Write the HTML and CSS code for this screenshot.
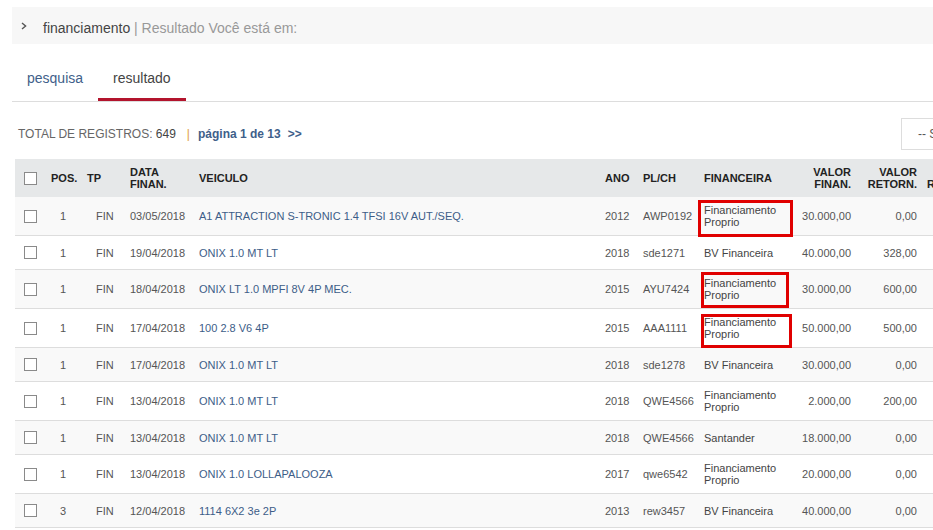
FILE: index.html
```html
<!DOCTYPE html>
<html lang="pt-BR">
<head>
<meta charset="utf-8">
<title>Resultado</title>
<link rel="stylesheet" href="styles.css">
</head>
<body>
<div class="page">
  <nav class="breadcrumb">
    <svg class="chev" width="6" height="8" viewBox="0 0 6 8"><path d="M1 1 L4.6 4 L1 7" fill="none" stroke="#555" stroke-width="1.4"/></svg>
    <span class="crumb">financiamento</span>
    <span class="crumb-rest">&nbsp;| Resultado Você está em:</span>
  </nav>

  <div class="tabs">
    <a class="tab">pesquisa</a>
    <a class="tab active">resultado</a>
  </div>

  <div class="toolbar">
    <div class="summary">
      <span class="label">TOTAL DE REGISTROS:</span> <span class="count">649</span><span class="pipe">|</span><span class="pager">página 1 de 13<span class="next">&gt;&gt;</span></span>
    </div>
    <div class="select">-- Selecione --</div>
  </div>

  <table class="grid">
    <colgroup>
      <col class="w-chk"><col class="w-pos"><col class="w-tp"><col class="w-data"><col class="w-veic"><col class="w-ano"><col class="w-pl"><col class="w-fin"><col class="w-vf"><col class="w-vr"><col class="w-r">
    </colgroup>
    <thead>
      <tr>
        <th class="c-chk"><span class="cb"></span></th>
        <th class="c-pos">POS.</th>
        <th class="c-tp">TP</th>
        <th class="c-data">DATA<br>FINAN.</th>
        <th class="c-veic">VEICULO</th>
        <th class="c-ano">ANO</th>
        <th class="c-pl">PL/CH</th>
        <th class="c-fin">FINANCEIRA</th>
        <th class="c-num">VALOR<br>FINAN.</th>
        <th class="c-num c-vr">VALOR<br>RETORN.</th>
        <th class="c-r">&nbsp;<br>R</th>
      </tr>
    </thead>
    <tbody>
      <tr>
        <td class="c-chk"><span class="cb"></span></td>
        <td class="c-pos">1</td><td class="c-tp">FIN</td><td class="c-data">03/05/2018</td>
        <td class="c-veic"><a class="link">A1 ATTRACTION S-TRONIC 1.4 TFSI 16V AUT./SEQ.</a></td>
        <td class="c-ano">2012</td><td class="c-pl">AWP0192</td>
        <td class="c-fin"><div class="fin">Financiamento Proprio</div><span class="mark mark-a"></span></td>
        <td class="c-num">30.000,00</td><td class="c-num c-vr">0,00</td><td class="c-r"></td>
      </tr>
      <tr>
        <td class="c-chk"><span class="cb"></span></td>
        <td class="c-pos">1</td><td class="c-tp">FIN</td><td class="c-data">19/04/2018</td>
        <td class="c-veic"><a class="link">ONIX 1.0 MT LT</a></td>
        <td class="c-ano">2018</td><td class="c-pl">sde1271</td>
        <td class="c-fin"><div class="fin">BV Financeira</div></td>
        <td class="c-num">40.000,00</td><td class="c-num c-vr">328,00</td><td class="c-r"></td>
      </tr>
      <tr>
        <td class="c-chk"><span class="cb"></span></td>
        <td class="c-pos">1</td><td class="c-tp">FIN</td><td class="c-data">18/04/2018</td>
        <td class="c-veic"><a class="link">ONIX LT 1.0 MPFI 8V 4P MEC.</a></td>
        <td class="c-ano">2015</td><td class="c-pl">AYU7424</td>
        <td class="c-fin"><div class="fin">Financiamento Proprio</div><span class="mark mark-b"></span></td>
        <td class="c-num">30.000,00</td><td class="c-num c-vr">600,00</td><td class="c-r"></td>
      </tr>
      <tr>
        <td class="c-chk"><span class="cb"></span></td>
        <td class="c-pos">1</td><td class="c-tp">FIN</td><td class="c-data">17/04/2018</td>
        <td class="c-veic"><a class="link">100 2.8 V6 4P</a></td>
        <td class="c-ano">2015</td><td class="c-pl">AAA1111</td>
        <td class="c-fin"><div class="fin">Financiamento Proprio</div><span class="mark mark-c"></span></td>
        <td class="c-num">50.000,00</td><td class="c-num c-vr">500,00</td><td class="c-r"></td>
      </tr>
      <tr>
        <td class="c-chk"><span class="cb"></span></td>
        <td class="c-pos">1</td><td class="c-tp">FIN</td><td class="c-data">17/04/2018</td>
        <td class="c-veic"><a class="link">ONIX 1.0 MT LT</a></td>
        <td class="c-ano">2018</td><td class="c-pl">sde1278</td>
        <td class="c-fin"><div class="fin">BV Financeira</div></td>
        <td class="c-num">30.000,00</td><td class="c-num c-vr">0,00</td><td class="c-r"></td>
      </tr>
      <tr>
        <td class="c-chk"><span class="cb"></span></td>
        <td class="c-pos">1</td><td class="c-tp">FIN</td><td class="c-data">13/04/2018</td>
        <td class="c-veic"><a class="link">ONIX 1.0 MT LT</a></td>
        <td class="c-ano">2018</td><td class="c-pl">QWE4566</td>
        <td class="c-fin"><div class="fin">Financiamento Proprio</div></td>
        <td class="c-num">2.000,00</td><td class="c-num c-vr">200,00</td><td class="c-r"></td>
      </tr>
      <tr>
        <td class="c-chk"><span class="cb"></span></td>
        <td class="c-pos">1</td><td class="c-tp">FIN</td><td class="c-data">13/04/2018</td>
        <td class="c-veic"><a class="link">ONIX 1.0 MT LT</a></td>
        <td class="c-ano">2018</td><td class="c-pl">QWE4566</td>
        <td class="c-fin"><div class="fin">Santander</div></td>
        <td class="c-num">18.000,00</td><td class="c-num c-vr">0,00</td><td class="c-r"></td>
      </tr>
      <tr>
        <td class="c-chk"><span class="cb"></span></td>
        <td class="c-pos">1</td><td class="c-tp">FIN</td><td class="c-data">13/04/2018</td>
        <td class="c-veic"><a class="link">ONIX 1.0 LOLLAPALOOZA</a></td>
        <td class="c-ano">2017</td><td class="c-pl">qwe6542</td>
        <td class="c-fin"><div class="fin">Financiamento Proprio</div></td>
        <td class="c-num">20.000,00</td><td class="c-num c-vr">0,00</td><td class="c-r"></td>
      </tr>
      <tr>
        <td class="c-chk"><span class="cb"></span></td>
        <td class="c-pos">3</td><td class="c-tp">FIN</td><td class="c-data">12/04/2018</td>
        <td class="c-veic"><a class="link">1114 6X2 3e 2P</a></td>
        <td class="c-ano">2013</td><td class="c-pl">rew3457</td>
        <td class="c-fin"><div class="fin">BV Financeira</div></td>
        <td class="c-num">40.000,00</td><td class="c-num c-vr">0,00</td><td class="c-r"></td>
      </tr>
    </tbody>
  </table>
</div>
</body>
</html>
```

FILE: styles.css
```css
html, body {
  margin: 0;
  padding: 0;
  overflow: hidden;
  background: #fff;
}
body {
  font-family: "Liberation Sans", Arial, sans-serif;
  color: #555;
}
.page {
  width: 1060px;
  padding-left: 12px;
  box-sizing: border-box;
}

/* breadcrumb */
.breadcrumb {
  margin-top: 7px;
  height: 37px;
  box-sizing: border-box;
  background: #f7f7f7;
  display: flex;
  align-items: center;
  padding: 4px 0 0 9px;
  font-size: 14px;
  line-height: 16px;
}
.chev {
  display: block;
  margin-bottom: 4px;
}
.crumb {
  margin-left: 16px;
  color: #444;
}
.crumb-rest {
  color: #999;
}

/* tabs */
.tabs {
  margin-top: 14px;
  display: flex;
  border-bottom: 1px solid #ddd;
}
.tab {
  padding: 12px 15px;
  font-size: 14px;
  line-height: 16px;
  border-bottom: 3px solid transparent;
  color: #3f5f8a;
  text-decoration: none;
}
.tab.active {
  color: #444;
  border-bottom-color: #b3142d;
}

/* toolbar */
.toolbar {
  margin-top: 16px;
  height: 32px;
  display: flex;
  align-items: center;
  justify-content: space-between;
  padding-left: 6px;
  font-size: 12px;
  line-height: 16px;
}
.label {
  color: #666;
}
.count {
  color: #444;
}
.pipe {
  color: #e0a040;
  margin: 0 8px 0 11px;
}
.pager {
  color: #3f5f8a;
  font-weight: bold;
}
.next {
  margin-left: 7px;
}
.select {
  width: 159px;
  height: 32px;
  box-sizing: border-box;
  border: 1px solid #ddd;
  padding-left: 16px;
  display: flex;
  align-items: center;
  color: #555;
}

/* table */
.grid {
  margin-top: 9px;
  margin-left: 3px;
  border-collapse: separate;
  border-spacing: 0;
  table-layout: fixed;
  width: 1025px;
  font-size: 11px;
  line-height: 12px;
}
.w-chk { width: 29px; }
.w-pos { width: 36px; }
.w-tp { width: 42px; }
.w-data { width: 69px; }
.w-veic { width: 406px; }
.w-ano { width: 38px; }
.w-pl { width: 61px; }
.w-fin { width: 99px; }
.w-vf { width: 64px; }
.w-vr { width: 66px; }
.w-r { width: 115px; }

.grid th {
  background: #e6e8e9;
  height: 38px;
  padding: 0 0 0 8px;
  font-weight: bold;
  color: #222;
  text-align: left;
  vertical-align: middle;
  white-space: nowrap;
}
.grid td {
  height: 33px;
  padding: 0 0 0 8px;
  border-bottom: 1px solid #ddd;
  vertical-align: middle;
  color: #555;
  white-space: nowrap;
}
.grid tbody tr:nth-child(odd) td {
  background: #f9f9f9;
}

.grid .c-chk { padding-left: 9px; }
.grid th.c-pos { padding-left: 7px; }
.grid td.c-pos { padding-left: 16px; }
.grid th.c-tp { padding-left: 7px; }
.grid td.c-tp { padding-left: 16px; }
.grid .c-fin {
  position: relative;
  padding-right: 8px;
  white-space: normal;
}
.grid .c-num {
  text-align: right;
  padding-left: 0;
  padding-right: 8px;
}
.grid .c-r { padding-left: 2px; }

.cb {
  display: block;
  width: 11px;
  height: 11px;
  border: 1px solid #8a8a8a;
  background: #fff;
}
.link {
  color: #3d5d88;
  text-decoration: none;
}
.fin {
  padding: 7px 0;
  color: #444;
}

/* hand-drawn red highlight boxes */
.mark {
  position: absolute;
  box-sizing: border-box;
  border: 3px solid #e00000;
}
.mark-a { left: 2px; top: 3px; width: 95px; height: 37px; }
.mark-b { left: 5px; top: 2px; width: 88px; height: 36px; }
.mark-c { left: 5px; top: 5px; width: 91px; height: 34px; }
```
